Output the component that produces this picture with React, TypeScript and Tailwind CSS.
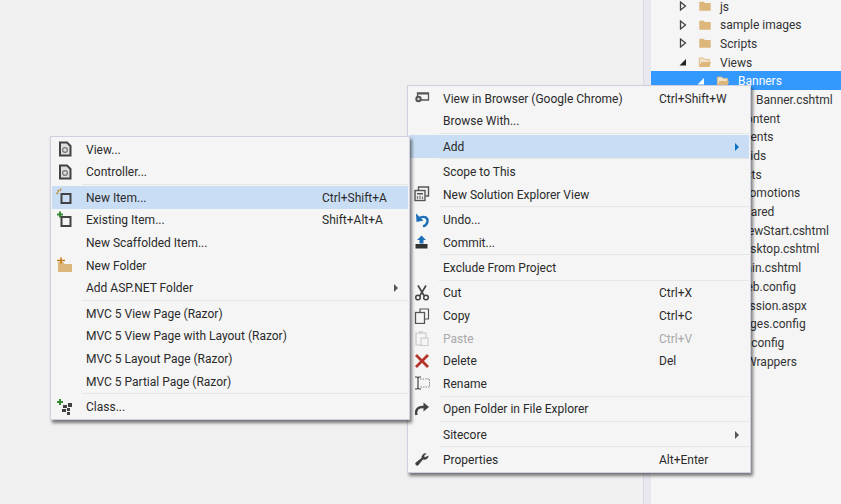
import type { ReactNode } from "react";

const font = "font-['Roboto','Noto_Sans',sans-serif]";

type Row = {
  label?: string;
  icon?: ReactNode;
  key2?: string;
  arrow?: boolean;
  active?: boolean;
  off?: boolean;
  sep?: boolean;
};

function Page() {
  return (
    <svg width="16" height="16" viewBox="0 0 16 16">
      <path d="M3 1.500h7l3.500 3.500v9.500H3z" fill="#dedede" stroke="#424242" strokeWidth="2" />
      <circle cx="8" cy="9" r="2.400" fill="none" stroke="#777" strokeWidth="1.200" />
    </svg>
  );
}

function NewItem() {
  return (
    <svg width="18" height="18" viewBox="0 0 18 18">
      <path d="M1.500 6a4 4 0 0 1 4-4.500" fill="none" stroke="#c27d1a" strokeWidth="2" strokeDasharray="1.500 1" />
      <rect x="5.500" y="6" width="9" height="9" fill="none" stroke="#424242" strokeWidth="2" />
    </svg>
  );
}

function ExistingItem() {
  return (
    <svg width="18" height="18" viewBox="0 0 18 18">
      <path d="M4 0.500v6M1 3.500h6" stroke="#388a34" strokeWidth="2" />
      <rect x="5.500" y="6" width="9" height="9" fill="#f5f5f5" stroke="#424242" strokeWidth="2" />
    </svg>
  );
}

function NewFolder() {
  return (
    <svg width="18" height="18" viewBox="0 0 18 18">
      <path d="M2 6h5l1.500 2H16v8H2z" fill="#dcb67a" />
      <path d="M1 4.500h8M5 1.500v6" stroke="#c27d1a" strokeWidth="1.600" />
    </svg>
  );
}

function ClassIcon() {
  return (
    <svg width="18" height="18" viewBox="0 0 18 18">
      <path d="M4 1v6M1 4h6" stroke="#388a34" strokeWidth="2" />
      <path d="M7 7h4v3H7zM12 5h4v4h-4zM11 10h3v3h-3zM6 11h4v3H6zM11 14h3v3h-3z" fill="#424242" />
    </svg>
  );
}

function Browser() {
  return (
    <svg width="16" height="16" viewBox="0 0 16 16">
      <path d="M3.500 3h11v7h-11z" fill="none" stroke="#555" strokeWidth="1.300" />
      <path d="M3 3h12v1.500H3z" fill="#555" />
      <circle cx="4.500" cy="9" r="3.200" fill="#555" />
      <circle cx="4.500" cy="9" r="1.200" fill="#ddd" />
    </svg>
  );
}

function SolutionView() {
  return (
    <svg width="18" height="18" viewBox="0 0 18 18">
      <path d="M5.500 5V2h10v9h-3" fill="none" stroke="#555" strokeWidth="1.400" />
      <rect x="2" y="5.500" width="10" height="10" fill="#eee" stroke="#555" strokeWidth="1.400" />
      <path d="M4 8h6v1.500H4z" fill="#555" />
      <path d="M4.500 11v3M7 10.500v3.500M9.500 11.500V14" stroke="#777" strokeWidth="1.200" />
    </svg>
  );
}

function Undo() {
  return (
    <svg width="16" height="16" viewBox="0 0 16 16">
      <path d="M5 6.500c4-3 9-1.500 8.500 3 -.3 2.200-2 4-4.500 5" fill="none" stroke="#1c6fb8" strokeWidth="2.400" />
      <path d="M2 1.500l.5 8.500 7-1.500z" fill="#1c6fb8" />
    </svg>
  );
}

function Commit() {
  return (
    <svg width="16" height="16" viewBox="0 0 16 16">
      <path d="M1.500 10h12v4.500h-12z" fill="#333" />
      <path d="M7.500 1.500l4.500 4.500H9.500v3.500h-4V6H3z" fill="#1c6fb8" />
    </svg>
  );
}

function Cut() {
  return (
    <svg width="16" height="16" viewBox="0 0 16 16">
      <path d="M4 0.500l6 10M12 0.500l-6 10" stroke="#424242" strokeWidth="1.600" />
      <circle cx="4" cy="12.500" r="2.300" fill="none" stroke="#424242" strokeWidth="1.500" />
      <circle cx="12" cy="12.500" r="2.300" fill="none" stroke="#424242" strokeWidth="1.500" />
    </svg>
  );
}

function Copy() {
  return (
    <svg width="16" height="16" viewBox="0 0 16 16">
      <path d="M6 4V1h8.500v10H11" fill="none" stroke="#555" strokeWidth="1.200" />
      <rect x="1.500" y="4.500" width="9" height="11" fill="none" stroke="#555" strokeWidth="1.300" />
    </svg>
  );
}

function Paste() {
  return (
    <svg width="16" height="16" viewBox="0 0 16 16">
      <path d="M2 3h10v12H2z" fill="none" stroke="#c8c8c8" strokeWidth="1.200" />
      <path d="M5 1h4v3H5z" fill="#d4d4d4" />
      <rect x="7" y="8" width="7" height="7.500" fill="#f5f5f5" stroke="#c8c8c8" />
    </svg>
  );
}

function Delete() {
  return (
    <svg width="16" height="16" viewBox="0 0 16 16">
      <path d="M2 2l12 12M14 2L2 14" stroke="#b5352a" strokeWidth="2.800" />
    </svg>
  );
}

function Rename() {
  return (
    <svg width="16" height="16" viewBox="0 0 16 16">
      <path d="M6 4h9.500v8H6" fill="none" stroke="#888" strokeDasharray="1.500 1" />
      <path d="M1 2h2l1 1 1-1h2M4 3v10M1 14h2l1-1 1 1h2" fill="none" stroke="#444" strokeWidth="1.200" />
    </svg>
  );
}

function OpenFolder() {
  return (
    <svg width="16" height="16" viewBox="0 0 16 16">
      <path d="M2.500 14C1 8 4.500 5.500 10 6" fill="none" stroke="#424242" strokeWidth="2.400" />
      <path d="M9.500 1.500L15 6l-5.500 4.500z" fill="#424242" />
    </svg>
  );
}

function Wrench() {
  return (
    <svg width="16" height="16" viewBox="0 0 16 16">
      <path d="M14.500 4.500a4 4 0 0 1-5.500 4L4.500 14a1.800 1.800 0 0 1-2.700-2.500L7.500 7a4 4 0 0 1 5-4.500L10 5l1 1.200z" fill="#424242" />
    </svg>
  );
}

const leftRows: Row[] = [
  { label: "View...", icon: <Page /> },
  { label: "Controller...", icon: <Page /> },
  { sep: true },
  { label: "New Item...", icon: <NewItem />, key2: "Ctrl+Shift+A", active: true },
  { label: "Existing Item...", icon: <ExistingItem />, key2: "Shift+Alt+A" },
  { label: "New Scaffolded Item..." },
  { label: "New Folder", icon: <NewFolder /> },
  { label: "Add ASP.NET Folder", arrow: true },
  { sep: true },
  { label: "MVC 5 View Page (Razor)" },
  { label: "MVC 5 View Page with Layout (Razor)" },
  { label: "MVC 5 Layout Page (Razor)" },
  { label: "MVC 5 Partial Page (Razor)" },
  { sep: true },
  { label: "Class...", icon: <ClassIcon /> },
];

const rightRows: Row[] = [
  { label: "View in Browser (Google Chrome)", icon: <Browser />, key2: "Ctrl+Shift+W" },
  { label: "Browse With..." },
  { sep: true },
  { label: "Add", arrow: true, active: true },
  { sep: true },
  { label: "Scope to This" },
  { label: "New Solution Explorer View", icon: <SolutionView /> },
  { sep: true },
  { label: "Undo...", icon: <Undo /> },
  { label: "Commit...", icon: <Commit /> },
  { sep: true },
  { label: "Exclude From Project" },
  { sep: true },
  { label: "Cut", icon: <Cut />, key2: "Ctrl+X" },
  { label: "Copy", icon: <Copy />, key2: "Ctrl+C" },
  { label: "Paste", icon: <Paste />, key2: "Ctrl+V", off: true },
  { label: "Delete", icon: <Delete />, key2: "Del" },
  { label: "Rename", icon: <Rename /> },
  { sep: true },
  { label: "Open Folder in File Explorer", icon: <OpenFolder /> },
  { sep: true },
  { label: "Sitecore", arrow: true },
  { sep: true },
  { label: "Properties", icon: <Wrench />, key2: "Alt+Enter" },
];

function MenuRows({ rows, keyWidth }: { rows: Row[]; keyWidth: string }) {
  return (
    <div className="flex flex-col">
      {rows.map((row, i) =>
        row.sep ? (
          <div key={i} className="h-[2.67px] pl-[30px] flex items-center">
            <div className="h-px w-full bg-[#e6e6e6]" />
          </div>
        ) : (
          <div
            key={i}
            className={`h-[22.67px] flex items-center ${row.active ? "bg-[#c9def5]" : ""} ${
              row.off ? "text-[#a9a9a9]" : "text-[#2a2a2a]"
            }`}
          >
            <div className="w-[26px] flex justify-center shrink-0">{row.icon}</div>
            <div className="ml-2 pt-px flex-1 whitespace-nowrap">{row.label}</div>
            <div className={`${keyWidth} pt-px shrink-0 flex items-center justify-between whitespace-nowrap pr-[10px]`}>
              <span>{row.key2}</span>
              {row.arrow && (
                <span
                  className={`w-0 h-0 border-y-4 border-y-transparent border-l-4 ${
                    row.active ? "border-l-[#0e70c0]" : "border-l-[#555]"
                  }`}
                />
              )}
            </div>
          </div>
        ),
      )}
    </div>
  );
}

function FolderIcon({ open, light }: { open?: boolean; light?: boolean }) {
  return (
    <svg width="14" height="14" viewBox="0 0 16 16">
      {open ? (
        <>
          <path d="M1.500 3.500h5l1.500 1.500h5v8h-11.500z" fill={light ? "#f3e3c6" : "#f0e2c8"} stroke="#dcb67a" />
          <path d="M4 8h11l-2 5.500H1.500z" fill="#dcb67a" />
        </>
      ) : (
        <path d="M1.500 3h5l1.500 1.500h6.500v9h-13z" fill="#dcb67a" />
      )}
    </svg>
  );
}

type TreeRow = {
  label: string;
  left: string;
  arrow?: "closed" | "open" | "white";
  folder?: "closed" | "open";
  selected?: boolean;
};

const treeRows: TreeRow[] = [
  { label: "js", left: "pl-[27px]", arrow: "closed", folder: "closed" },
  { label: "sample images", left: "pl-[27px]", arrow: "closed", folder: "closed" },
  { label: "Scripts", left: "pl-[27px]", arrow: "closed", folder: "closed" },
  { label: "Views", left: "pl-[27px]", arrow: "open", folder: "open" },
  { label: "Banners", left: "pl-[45px]", arrow: "white", folder: "open", selected: true },
  { label: "Banner.cshtml", left: "pl-[105px]" },
  { label: "Content", left: "pl-[87px]" },
  { label: "Events", left: "pl-[87px]" },
  { label: "Grids", left: "pl-[87px]" },
  { label: "Lists", left: "pl-[85px]" },
  { label: "Promotions", left: "pl-[87px]" },
  { label: "Shared", left: "pl-[86px]" },
  { label: "_ViewStart.cshtml", left: "pl-[81px]" },
  { label: "Desktop.cshtml", left: "pl-[85px]" },
  { label: "Main.cshtml", left: "pl-[84px]" },
  { label: "Web.config", left: "pl-[85px]" },
  { label: "Session.aspx", left: "pl-[85px]" },
  { label: "Pages.config", left: "pl-[85px]" },
  { label: "UI.config", left: "pl-[86px]" },
  { label: "Wrappers", left: "pl-[95px]" },
];

function Tree() {
  return (
    <div className="-mt-[3.3px] flex flex-col text-[#333]">
      {treeRows.map((row) => (
        <div
          key={row.label + row.left}
          className={`h-[18.7px] flex items-center whitespace-nowrap ${row.left} ${
            row.selected ? "bg-[#3399ff] text-white" : ""
          }`}
        >
          {row.arrow && (
            <svg width="10" height="10" viewBox="0 0 10 10" className="mr-[10px] shrink-0">
              {row.arrow === "closed" && <path d="M2.500 1l5 4-5 4z" fill="#f5f5f5" stroke="#444" strokeWidth="1.300" />}
              {row.arrow === "open" && <path d="M8 2v6.500H1.500z" fill="#222" />}
              {row.arrow === "white" && <path d="M8 2v6.500H1.500z" fill="#fff" />}
            </svg>
          )}
          {row.folder && (
            <span className="w-[16px] shrink-0 mr-[4px] flex">
              <FolderIcon open={row.folder === "open"} light={row.selected} />
            </span>
          )}
          <span className={row.folder ? "ml-[2px] pt-px" : "pt-px"}>{row.label}</span>
        </div>
      ))}
    </div>
  );
}

export default function App() {
  return (
    <div className={`${font} relative w-[841px] h-[504px] overflow-hidden flex bg-[#f0f0f0] text-[12px]`}>
      <div className="flex-1" />
      <div className="w-[8px] bg-[#e8e9ef] border-l border-[#d9dae4]" />
      <div className="w-[190px] bg-[#f5f5f5] overflow-hidden">
        <Tree />
      </div>

      <div className="absolute left-[407px] top-[85px] w-[344px] bg-[#f5f5f5] border border-[#cfd0de] shadow-[2px_3px_3px_rgba(0,0,0,0.5)] p-px">
        <MenuRows rows={rightRows} keyWidth="w-[90px]" />
      </div>

      <div className="absolute left-[50px] top-[136px] w-[360px] bg-[#f5f5f5] border border-[#cfd0de] shadow-[2px_3px_3px_rgba(0,0,0,0.5)] p-px">
        <MenuRows rows={leftRows} keyWidth="w-[86px]" />
      </div>
    </div>
  );
}
